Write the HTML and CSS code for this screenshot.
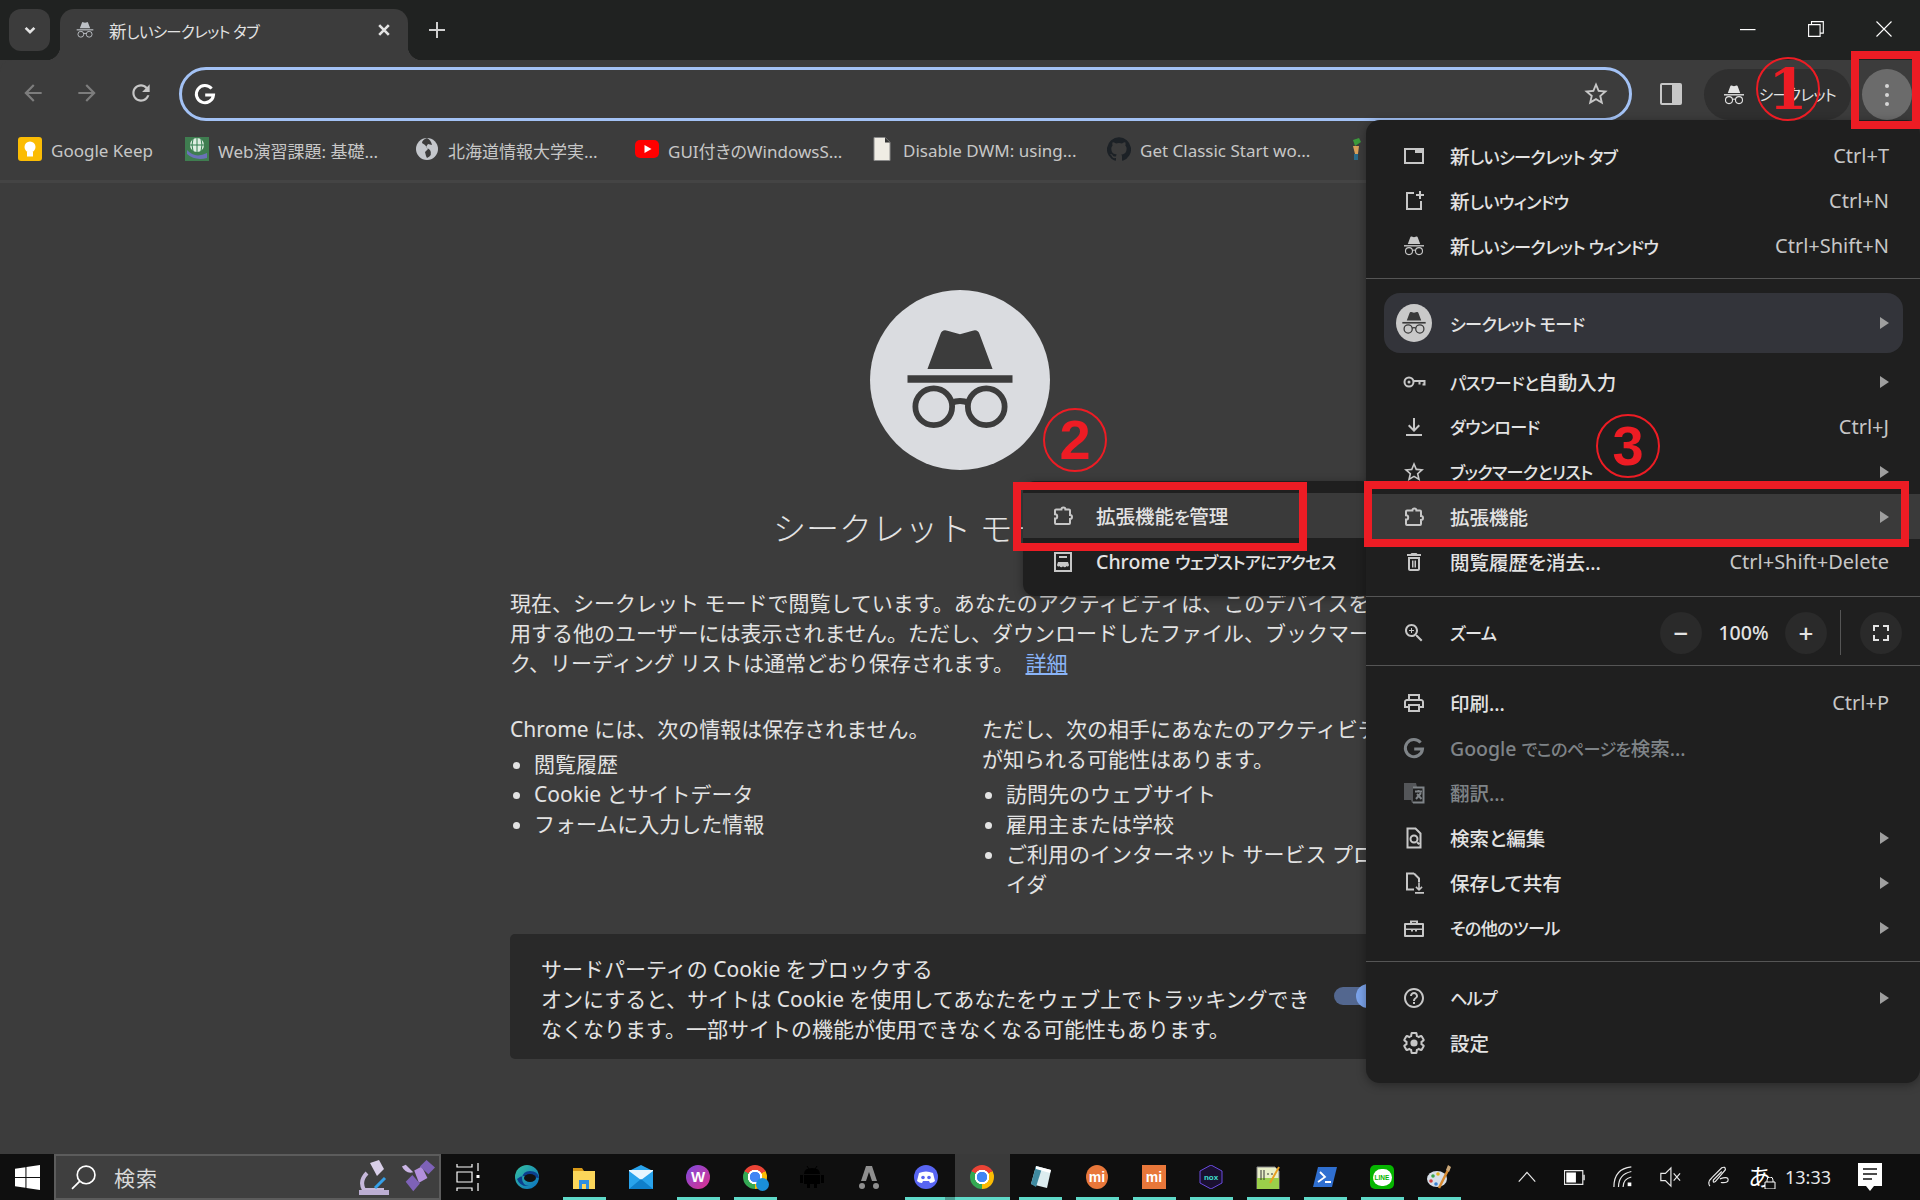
FILE: index.html
```html
<!DOCTYPE html>
<html lang="ja">
<head>
<meta charset="utf-8">
<title>新しいシークレット タブ</title>
<link rel="stylesheet" href="styles.css">
</head>
<body>
<svg class="defs" width="0" height="0">
  <symbol id="i-inc" viewBox="0 0 24 24"><path d="M5.800 9.900 8.300 3.200q.3-.9 1.300-.6l2.400.7 2.400-.7q1-.3 1.300.6l2.500 6.700z"/><path d="M2 11.100h20v1.400H2z"/><circle class="glass" cx="7" cy="17.100" r="3.500"/><circle class="glass" cx="17" cy="17.100" r="3.500"/><path class="glass" d="M10.300 16.400q1.700-.8 3.400 0"/></symbol>
  <symbol id="i-back" viewBox="0 0 24 24"><path d="M20 11H7.830l5.590-5.590L12 4l-8 8 8 8 1.410-1.410L7.830 13H20v-2z"/></symbol>
  <symbol id="i-fwd" viewBox="0 0 24 24"><path d="M12 4l-1.410 1.410L16.170 11H4v2h12.170l-5.580 5.590L12 20l8-8z"/></symbol>
  <symbol id="i-reload" viewBox="0 0 24 24"><path d="M17.650 6.350C16.200 4.900 14.210 4 12 4c-4.420 0-7.990 3.580-7.990 8s3.570 8 7.990 8c3.730 0 6.840-2.550 7.730-6h-2.080c-.82 2.330-3.040 4-5.650 4-3.310 0-6-2.690-6-6s2.690-6 6-6c1.660 0 3.140.69 4.220 1.780L13 11h7V4l-2.350 2.350z"/></symbol>
  <symbol id="i-star" viewBox="0 0 24 24"><path d="M22 9.240l-7.190-.62L12 2 9.190 8.630 2 9.240l5.460 4.730L5.820 21 12 17.270 18.180 21l-1.630-7.030L22 9.240zM12 15.400l-3.760 2.270 1-4.280-3.320-2.880 4.380-.38L12 6.100l1.710 4.040 4.380.38-3.320 2.880 1 4.280L12 15.400z"/></symbol>
  <symbol id="i-g" viewBox="0 0 24 24"><path class="stroked thick" d="M18.600 6.600A8.600 8.600 0 1 0 20.500 13H12.200"/></symbol>
  <symbol id="i-newtab" viewBox="0 0 24 24"><path fill-rule="evenodd" d="M2 4h20v16H2zm2 2v12h16V9h-7V6z"/></symbol>
  <symbol id="i-newwin" viewBox="0 0 24 24"><path d="M12 3H4v18h16v-9h-2v7H6V5h6zM17 2h2v3h3v2h-3v3h-2V7h-3V5h3z"/></symbol>
  <symbol id="i-key" viewBox="0 0 24 24"><circle class="stroked" cx="7" cy="12" r="4.500"/><circle cx="7" cy="12" r="1.500"/><path class="stroked" d="M11.500 11h11v3.500h-2M17.500 11v3.500"/></symbol>
  <symbol id="i-dl" viewBox="0 0 24 24"><path d="M11 3h2v10.200l3.600-3.600L18 11l-6 6-6-6 1.400-1.400 3.600 3.600zM4 19h16v2H4z"/></symbol>
  <symbol id="i-ext" viewBox="0 0 24 24"><path class="stroked" d="M19 11V6.500a1 1 0 0 0-1-1h-3.600a2 2 0 0 0-4 0H5a1 1 0 0 0-1 1v3.700a2.200 2.200 0 0 1 0 4.400V19a1 1 0 0 0 1 1h13a1 1 0 0 0 1-1v-4a2 2 0 0 0 0-4z"/></symbol>
  <symbol id="i-trash" viewBox="0 0 24 24"><path d="M6 19c0 1.100.9 2 2 2h8c1.100 0 2-.9 2-2V7H6v12zM8 9h8v10H8V9zm7.500-5l-1-1h-5l-1 1H5v2h14V4z"/><path d="M10 10.500h1.500v7H10zM12.500 10.500H14v7h-1.500z"/></symbol>
  <symbol id="i-zoom" viewBox="0 0 24 24"><path d="M15.500 14h-.79l-.28-.27C15.410 12.590 16 11.110 16 9.500 16 5.910 13.090 3 9.500 3S3 5.910 3 9.500 5.910 16 9.500 16c1.610 0 3.090-.59 4.230-1.570l.27.28v.79l5 4.990L20.490 19l-4.990-5zm-6 0C7.010 14 5 11.990 5 9.500S7.010 5 9.500 5 14 7.010 14 9.500 11.990 14 9.500 14zM12 10h-2v2H9v-2H7V9h2V7h1v2h2v1z"/></symbol>
  <symbol id="i-print" viewBox="0 0 24 24"><path d="M19 8h-1V3H6v5H5c-1.660 0-3 1.340-3 3v6h4v4h12v-4h4v-6c0-1.660-1.340-3-3-3zM8 5h8v3H8V5zm8 12v2H8v-4h8v2zm2-2v-2H6v2H4v-4c0-.55.45-1 1-1h14c.55 0 1 .45 1 1v4h-2z"/></symbol>
  <symbol id="i-tr" viewBox="0 0 24 24"><path d="M2 2h12l1 4h7v16H10l-1-3H2z" opacity=".55"/><path d="M11 7h10v14H11z" fill="#1f1f1f"/><path class="stroked" d="M11 6.500h10.500v15H11M13 10.500h7M16.500 9v1.500M14 18l5-6M15 13l4.500 5"/></symbol>
  <symbol id="i-find" viewBox="0 0 24 24"><path class="stroked" d="M13.500 2.500H5.500v19h13V7.500zM15.200 16.200l2 2"/><circle class="stroked" cx="12" cy="13" r="3.500"/></symbol>
  <symbol id="i-save" viewBox="0 0 24 24"><path class="stroked" d="M12 2.500H5v16h7M12 2.500l5 5v4"/><path d="M16.200 12h1.600v5l1.700-1.700 1.100 1.100-3.600 3.600-3.600-3.600 1.100-1.100 1.700 1.700zM13 21h9v1.800h-9z"/></symbol>
  <symbol id="i-tool" viewBox="0 0 24 24"><path fill-rule="evenodd" d="M8 7V4.500h8V7h5a1 1 0 0 1 1 1v12a1 1 0 0 1-1 1H3a1 1 0 0 1-1-1V8a1 1 0 0 1 1-1zm2 0h4V6.300h-4zM4 9v3.500h16V9zm0 5v5h16v-5h-5v1.500h-2V14h-2v1.500H9V14z"/></symbol>
  <symbol id="i-help" viewBox="0 0 24 24"><path d="M11 18h2v-2h-2v2zm1-16C6.480 2 2 6.480 2 12s4.480 10 10 10 10-4.480 10-10S17.520 2 12 2zm0 18c-4.410 0-8-3.590-8-8s3.590-8 8-8 8 3.590 8 8-3.590 8-8 8zm0-14c-2.210 0-4 1.790-4 4h2c0-1.100.9-2 2-2s2 .9 2 2c0 2-3 1.750-3 5h2c0-2.250 3-2.500 3-5 0-2.210-1.790-4-4-4z"/></symbol>
  <symbol id="i-gear" viewBox="0 0 24 24"><path class="stroked" d="M19.430 12.980c.04-.32.07-.64.07-.98s-.03-.66-.07-.98l2.110-1.650c.19-.15.24-.42.12-.64l-2-3.460c-.12-.22-.39-.3-.61-.22l-2.490 1c-.52-.4-1.080-.73-1.690-.98l-.38-2.650C14.460 2.180 14.250 2 14 2h-4c-.25 0-.46.18-.49.42l-.38 2.650c-.61.25-1.170.59-1.690.98l-2.490-1c-.23-.09-.49 0-.61.22l-2 3.460c-.13.22-.07.49.12.64l2.110 1.650c-.04.32-.07.65-.07.98s.03.66.07.98l-2.110 1.650c-.19.15-.24.42-.12.64l2 3.460c.12.22.39.3.61.22l2.490-1c.52.4 1.080.73 1.690.98l.38 2.650c.03.24.24.42.49.42h4c.25 0 .46-.18.49-.42l.38-2.650c.61-.25 1.170-.59 1.690-.98l2.490 1c.23.09.49 0 .61-.22l2-3.460c.12-.22.07-.49-.12-.64l-2.110-1.650z"/><circle cx="12" cy="12" r="3.600"/></symbol>
  <symbol id="i-store" viewBox="0 0 24 24"><path fill-rule="evenodd" d="M3 2h18v20H3zm2 2v16h14V4zM8 6h8v2H8zM7 12h10l1 3a1.500 1.500 0 0 1-2.600 1 1.800 1.800 0 0 1-3.400 0 1.800 1.800 0 0 1-3.400 0A1.500 1.500 0 0 1 6 15z"/></symbol>
  <symbol id="i-full" viewBox="0 0 24 24"><path d="M4 4h6v2H6v4H4zM14 4h6v6h-2V6h-4zM4 14h2v4h4v2H4zM18 14h2v6h-6v-2h4z"/></symbol>
</svg>

<div class="tabstrip">
  <button class="tab-search"><svg class="ic-16" viewBox="0 0 16 16"><path class="stroked thick" d="M3 5.500l5 5 5-5"/></svg></button>
  <div class="tab">
    <svg class="tab-icon"><use href="#i-inc"/></svg>
    <span class="tab-title">新<span class="kana">しいシークレット タブ</span></span>
    <svg class="ic-16 tab-close" viewBox="0 0 16 16"><path class="stroked thick" d="M2.500 2.500l11 11M13.500 2.500l-11 11"/></svg>
  </div>
  <svg class="new-tab" viewBox="0 0 16 16"><path d="M7 0h2v7h7v2H9v7H7V9H0V7h7z"/></svg>
  <div class="win-ctl">
    <svg class="ic-win" viewBox="0 0 16 16"><path d="M0 8h15.500v1.200H0z"/></svg>
    <svg class="ic-win" viewBox="0 0 16 16"><path class="thin" d="M.6 3.600h11.500v11.800H.6zM3.500 3.500V.6h11.800v11.500h-3"/></svg>
    <svg class="ic-win" viewBox="0 0 16 16"><path class="thin" d="M.5.500l15 15M15.500.500l-15 15"/></svg>
  </div>
</div>

<div class="toolbar">
  <svg class="tb-btn dim"><use href="#i-back"/></svg>
  <svg class="tb-btn dim"><use href="#i-fwd"/></svg>
  <svg class="tb-btn"><use href="#i-reload"/></svg>
  <div class="omnibox">
    <svg class="omni-g"><use href="#i-g"/></svg>
    <svg class="omni-star"><use href="#i-star"/></svg>
  </div>
  <svg class="side-panel" viewBox="0 0 22 22"><path fill-rule="evenodd" d="M2 0h18a2 2 0 0 1 2 2v18a2 2 0 0 1-2 2H2a2 2 0 0 1-2-2V2a2 2 0 0 1 2-2zm0 2v18h10V2z"/></svg>
  <div class="pill">
    <svg class="pill-icon"><use href="#i-inc"/></svg>
    <span class="kana">シークレット</span>
  </div>
  <div class="kebab"><i></i><i></i><i></i></div>
</div>

<div class="bookmarks">
  <div class="bm">
    <svg class="fav" viewBox="0 0 24 24"><rect width="24" height="24" rx="3" fill="#fbbc04"/><circle cx="12" cy="10" r="5.500" fill="#fff"/><rect x="9" y="15" width="6" height="4.500" fill="#fff"/></svg>
    <span>Google Keep</span>
  </div>
  <div class="bm">
    <svg class="fav" viewBox="0 0 24 24"><rect width="24" height="24" fill="#3f7d50"/><circle cx="12" cy="8" r="7" fill="#dfeee2"/><path d="M5 8h14M12 1v14M8 2q-2 6 0 12M16 2q2 6 0 12" stroke="#2f7d4d" fill="none"/><path d="M2 13q8 9 20 3v5q-12 3-20-4z" fill="#6a72b8"/></svg>
    <span>Web演習課題: 基礎...</span>
  </div>
  <div class="bm">
    <svg class="fav" viewBox="0 0 24 24"><circle cx="12" cy="12" r="11" fill="#c4c7cc"/><path d="M12 1q-5 2-5 5l3 2 3 4-3 3 1 4 1 2q6-3 3-8l-4-3 2-3 4 1q-1-5-5-7z" fill="#3c3c3c"/></svg>
    <span>北海道情報大学実...</span>
  </div>
  <div class="bm">
    <svg class="fav" viewBox="0 0 24 24"><rect y="3" width="24" height="18" rx="5" fill="#f00"/><path d="M9.500 8v8l7-4z" fill="#fff"/></svg>
    <span>GUI付きのWindowsS...</span>
  </div>
  <div class="bm">
    <svg class="fav" viewBox="0 0 24 24"><path d="M4 .5h11l5 5v18H4z" fill="#efece4" stroke="#8a8a8a"/><path d="M15 .5l5 5h-5z" fill="#333"/></svg>
    <span>Disable DWM: using...</span>
  </div>
  <div class="bm">
    <svg class="fav" viewBox="0 0 24 24"><path fill="#1c2126" d="M12 .3a12 12 0 0 0-3.800 23.400c.6.1.8-.3.8-.6v-2c-3.300.7-4-1.600-4-1.600-.6-1.400-1.400-1.800-1.400-1.800-1-.7.1-.7.1-.7 1.200 0 1.900 1.200 1.900 1.200 1 1.800 2.800 1.300 3.500 1 0-.8.4-1.300.7-1.600-2.700-.3-5.500-1.300-5.500-6 0-1.200.5-2.300 1.300-3.100-.2-.4-.6-1.600 0-3.200 0 0 1-.3 3.400 1.200a11.500 11.500 0 0 1 6 0c2.300-1.500 3.300-1.200 3.300-1.200.6 1.600.2 2.800 0 3.200.9.8 1.300 1.900 1.300 3.200 0 4.600-2.800 5.600-5.500 5.900.5.4.9 1 .9 2.200v3.300c0 .3.1.7.8.6A12 12 0 0 0 12 .3"/></svg>
    <span>Get Classic Start wo...</span>
  </div>
  <div class="bm">
    <svg class="fav" viewBox="0 0 24 24"><path d="M8 3l6-2 2 4-6 4z" fill="#3c9a3c"/><path d="M8 9h6l-1 8h-3z" fill="#d9a05a"/><path d="M9 17h4v6H9z" fill="#2a6a8a"/></svg>
  </div>
</div>

<main class="ntp">
  <div class="hero">
    <svg viewBox="0 0 24 24"><use href="#i-inc"/></svg>
  </div>
  <h1 class="ntp-title">シークレット モード</h1>
  <p class="ntp-intro">現在、シークレット モードで閲覧しています。あなたのアクティビティは、このデバイスを使<br>用する他のユーザーには表示されません。ただし、ダウンロードしたファイル、ブックマー<br>ク、リーディング リストは通常どおり保存されます。 <a href="#">詳細</a></p>
  <div class="ntp-cols">
    <div>
      <p>Chrome には、次の情報は保存されません。</p>
      <ul>
        <li>閲覧履歴</li>
        <li>Cookie とサイトデータ</li>
        <li>フォームに入力した情報</li>
      </ul>
    </div>
    <div>
      <p>ただし、次の相手にあなたのアクティビティ<br>が知られる可能性はあります。</p>
      <ul>
        <li>訪問先のウェブサイト</li>
        <li>雇用主または学校</li>
        <li>ご利用のインターネット サービス プロバ<br>イダ</li>
      </ul>
    </div>
  </div>
  <div class="cookie-card">
    <div>
      <div>サードパーティの Cookie をブロックする</div>
      <div>オンにすると、サイトは Cookie を使用してあなたをウェブ上でトラッキングでき<br>なくなります。一部サイトの機能が使用できなくなる可能性もあります。</div>
    </div>
    <div class="toggle"><i></i></div>
  </div>
</main>

<div class="taskbar">
  <svg class="win-logo" viewBox="0 0 24 24"><path d="M0 3.500l10-1.400v9.300H0zM11 2l13-2v11.400H11zM0 12.500h10v9.400L0 20.500zM11 12.500h13V24l-13-1.900z"/></svg>
  <div class="task-search">
    <svg class="search-glass" viewBox="0 0 24 24"><circle cx="14.500" cy="9.500" r="8.500"/><path d="M8.500 15.500L1 23"/></svg>
    <span>検索</span>
    <svg class="search-emoji" viewBox="0 0 34 38"><path d="M13 5l9-3 5 9-7 7z" fill="#d9cfe8"/><path d="M10 15q-8 8-3 17h20" fill="none" stroke="#c6b8da" stroke-width="4"/><path d="M2 32h30v5H2z" fill="#bcaed2"/><path d="M18 30l10-10" stroke="#35a0e8" stroke-width="3"/></svg>
    <svg class="search-emoji sat" viewBox="0 0 36 38"><path d="M14 12l8-4 6 12-9 5z" fill="#b28fdc"/><path d="M20 8l7-7 9 8-7 7z" fill="#7e62b8"/><path d="M5 24l7-7 8 9-7 8z" fill="#7e62b8"/><path d="M1 8q4 8 12 6l-8-8z" fill="#cbb6e6"/></svg>
  </div>
  <svg class="task-view" viewBox="0 0 24 28"><path d="M1 1v3h15V1M1 28v-3h15v3M1 9h15v10H1zM22 0v8M22 20v8"/><path class="fillw" d="M20.500 12h3v3h-3z"/></svg>
  <div class="task-apps">
    <div class="slot"><svg class="app" viewBox="0 0 24 24"><defs><linearGradient id="eg" x1="0" y1="0" x2="1" y2="1"><stop offset="0" stop-color="#36c3a0"/><stop offset="1" stop-color="#0a6fc2"/></linearGradient></defs><circle cx="12" cy="12" r="12" fill="url(#eg)"/><path d="M24 13q-1-7-9-7-7 0-8 7 0 7 7 8-9 1-12-7 3-3 7-3z" fill="#0c3f8e"/><ellipse cx="15" cy="13" rx="6" ry="4" fill="#111"/></svg></div>
    <div class="slot on"><svg class="app" viewBox="0 0 24 24"><path d="M1 3h9l2 3H1z" fill="#d99a18"/><path d="M1 6h22v18H1z" fill="#fbd65a"/><path d="M7 15h10v9h-3v-5h-4v5H7z" fill="#2f8fe0"/></svg></div>
    <div class="slot"><svg class="app" viewBox="0 0 24 24"><path d="M0 6l12-6 12 6v18H0z" fill="#29a3ec"/><path d="M0 6l12 9 12-9v-1H0z" fill="#e8f6ff"/><path d="M0 24l12-10 12 10z" fill="#0f7fcb"/></svg></div>
    <div class="slot on"><div class="app wps">W</div></div>
    <div class="slot on"><div class="app chrome-logo badge"><i></i></div></div>
    <div class="slot"><svg class="app" viewBox="0 0 24 24"><path d="M4 9q0-6 8-6t8 6zM4 10h16v9h-3v4h-3v-4h-4v4H7v-4H4zM0 10h3v8H0zM21 10h3v8h-3z" fill="#000"/><path d="M7 1l2 3M17 1l-2 3" stroke="#000"/></svg></div>
    <div class="slot"><svg class="app" viewBox="0 0 24 24"><path d="M9 1h6l5 15h-5l-3-9-3 9H4z" fill="#8f8f8f"/><circle cx="5" cy="21" r="3" fill="#8f8f8f"/><circle cx="19" cy="21" r="3" fill="#8f8f8f"/></svg></div>
    <div class="slot split"><svg class="app" viewBox="0 0 24 24"><circle cx="12" cy="12" r="12" fill="#5865f2"/><path d="M5 8q7-3 14 0l2 8q-2 2-5 2l-1-2H9l-1 2q-3 0-5-2z" fill="#fff"/><circle cx="9" cy="12.500" r="1.800" fill="#5865f2"/><circle cx="15" cy="12.500" r="1.800" fill="#5865f2"/></svg></div>
    <div class="slot active"><div class="app chrome-logo"></div></div>
    <div class="slot on"><svg class="app" viewBox="0 0 24 24"><path d="M8 1l15 4-4 18-16-4z" fill="#dcecef"/><path d="M3 19L8 1l6 2-6 19z" fill="#3f8aa0"/><path d="M8 1l15 4-1 3L8 4z" fill="#fff"/></svg></div>
    <div class="slot on"><div class="app mi-round">mi</div></div>
    <div class="slot on"><div class="app mi-square">mi</div></div>
    <div class="slot on"><svg class="app" viewBox="0 0 24 24"><path d="M12 0l11 6v12l-11 6L1 18V6z" fill="#1a1030" stroke="#6a4be0"/><text x="12" y="15" text-anchor="middle" class="nox">nox</text></svg></div>
    <div class="slot on"><svg class="app" viewBox="0 0 24 24"><path d="M1 2h18l4 4v18H1z" fill="#e8efc8" stroke="#888"/><path d="M1 13h22v11H1z" fill="#9bd04a"/><path d="M5 5v10M8 5v10M11 9h2M15 9h2" stroke="#333"/><path d="M23 2L14 18" stroke="#e8a020" stroke-width="2"/></svg></div>
    <div class="slot on"><svg class="app" viewBox="0 0 24 24"><path d="M5 2h19l-5 20H0z" fill="#2f6fd0"/><path d="M7 7l5 5-7 5M12 17h6" fill="none" stroke="#fff" stroke-width="1.800"/></svg></div>
    <div class="slot on"><div class="app line-app"><span>LINE</span></div></div>
    <div class="slot on"><svg class="app" viewBox="0 0 24 24"><ellipse cx="10" cy="14" rx="10" ry="8" fill="#d7dfe8"/><circle cx="6" cy="11" r="1.800" fill="#3aa54a"/><circle cx="11" cy="9" r="1.800" fill="#e0b020"/><circle cx="4" cy="16" r="1.800" fill="#d04040"/><circle cx="9" cy="19" r="1.800" fill="#3a80d0"/><path d="M12 23L22 3" stroke="#d88a30" stroke-width="2.500"/><path d="M21 0l3 2-2 5-3-2z" fill="#c9a678"/></svg></div>
  </div>
  <div class="tray">
    <svg class="tray-ic" viewBox="0 0 24 24"><path d="M3 17l9-10 9 10"/></svg>
    <svg class="tray-ic battery" viewBox="0 0 24 16"><path d="M.5.500h20v15H.5zM22 5v6"/><path class="fillw" d="M2.500 2.500H13v11H2.500z"/></svg>
    <svg class="tray-ic" viewBox="0 0 24 24"><path d="M1 23Q1 3 20 1M6 23Q6 9 20 6M11 23q0-9 9-11"/><path class="fillw" d="M16 18h4v4h-4z"/></svg>
    <svg class="tray-ic" viewBox="0 0 24 24"><path d="M2 8h5l6-6v20l-6-6H2zM16 8l7 8M23 8l-7 8"/></svg>
    <svg class="tray-ic" viewBox="0 0 24 24"><path d="M2 22q-3-5 2-9L15 2q4-2 4 2L8 17q-3 2-2-2L15 6M13 14q9-3 9 1t-8 3"/></svg>
    <span class="tray-ime">あ<svg viewBox="0 0 12 12"><path d="M1 5h10v7H1zM3 5V3a3 3 0 0 1 6 0v2"/></svg></span>
    <span class="tray-time">13:33</span>
    <svg class="tray-note" viewBox="0 0 24 28"><path d="M0 0h24v23h-8l-4 5-4-5H0z" fill="#fff"/><path d="M5 6h14M5 11h14M5 16h9" stroke="#111" stroke-width="1.300"/></svg>
  </div>
</div>

<!-- open menus -->
<div class="submenu">
  <div class="sub-row hover"><svg class="mi"><use href="#i-ext"/></svg><span>拡張機能<span class="kana">を</span>管理</span></div>
  <div class="sub-row"><svg class="mi"><use href="#i-store"/></svg><span>Chrome <span class="kana">ウェブストアにアクセス</span></span></div>
</div>

<div class="menu">
  <div class="row"><svg class="mi"><use href="#i-newtab"/></svg><span class="label">新<span class="kana">しいシークレット タブ</span></span><span class="key">Ctrl+T</span></div>
  <div class="row"><svg class="mi"><use href="#i-newwin"/></svg><span class="label">新<span class="kana">しいウィンドウ</span></span><span class="key">Ctrl+N</span></div>
  <div class="row"><svg class="mi"><use href="#i-inc"/></svg><span class="label">新<span class="kana">しいシークレット ウィンドウ</span></span><span class="key">Ctrl+Shift+N</span></div>
  <hr class="sep sep-a">
  <div class="profile">
    <span class="avatar"><svg><use href="#i-inc"/></svg></span>
    <span class="label kana">シークレット モード</span><i class="arrow"></i>
  </div>
  <div class="row mt6"><svg class="mi"><use href="#i-key"/></svg><span class="label"><span class="kana">パスワードと</span>自動入力</span><i class="arrow"></i></div>
  <div class="row"><svg class="mi"><use href="#i-dl"/></svg><span class="label kana">ダウンロード</span><span class="key">Ctrl+J</span></div>
  <div class="row"><svg class="mi"><use href="#i-star"/></svg><span class="label kana">ブックマークとリスト</span><i class="arrow"></i></div>
  <div class="row hover"><svg class="mi"><use href="#i-ext"/></svg><span class="label">拡張機能</span><i class="arrow"></i></div>
  <div class="row"><svg class="mi"><use href="#i-trash"/></svg><span class="label">閲覧履歴を消去...</span><span class="key">Ctrl+Shift+Delete</span></div>
  <hr class="sep sep-b">
  <div class="row zoom-row">
    <svg class="mi"><use href="#i-zoom"/></svg><span class="label kana">ズーム</span>
    <span class="zbtn">−</span><span class="zval">100%</span><span class="zbtn">+</span>
    <span class="zdiv"></span>
    <span class="zbtn"><svg><use href="#i-full"/></svg></span>
  </div>
  <hr class="sep sep-c">
  <div class="row"><svg class="mi"><use href="#i-print"/></svg><span class="label">印刷...</span><span class="key">Ctrl+P</span></div>
  <div class="row off"><svg class="mi"><use href="#i-g"/></svg><span class="label">Google <span class="kana">でこのページを</span>検索...</span></div>
  <div class="row off"><svg class="mi"><use href="#i-tr"/></svg><span class="label">翻訳...</span></div>
  <div class="row"><svg class="mi"><use href="#i-find"/></svg><span class="label">検索と編集</span><i class="arrow"></i></div>
  <div class="row"><svg class="mi"><use href="#i-save"/></svg><span class="label">保存して共有</span><i class="arrow"></i></div>
  <div class="row"><svg class="mi"><use href="#i-tool"/></svg><span class="label kana">その他のツール</span><i class="arrow"></i></div>
  <hr class="sep sep-d">
  <div class="row"><svg class="mi"><use href="#i-help"/></svg><span class="label kana">ヘルプ</span><i class="arrow"></i></div>
  <div class="row"><svg class="mi"><use href="#i-gear"/></svg><span class="label">設定</span></div>
</div>

<!-- red annotations -->
<div class="frame frame-1"></div>
<div class="frame frame-2"></div>
<div class="frame frame-3"></div>
<div class="num num-1">1</div>
<div class="num num-2">2</div>
<div class="num num-3">3</div>
</body>
</html>
```

FILE: styles.css
```css
* { box-sizing: border-box; }
html, body { margin: 0; height: 100%; }
body {
  width: 1920px; height: 1200px; overflow: hidden; position: relative;
  display: flex; flex-direction: column;
  background: #3c3c3c; color: #e3e3e3;
  font-family: "Noto Sans", "Noto Sans CJK JP", sans-serif;
  font-feature-settings: "palt";
}
svg { display: block; fill: currentColor; }
.defs { position: absolute; }
.stroked { fill: none; stroke: currentColor; stroke-width: 2; }
.thick { stroke-width: 3; }
.thin { fill: none; stroke: currentColor; stroke-width: 1.1; }
.glass { fill: none; stroke: currentColor; stroke-width: 1.1; }
button { border: 0; padding: 0; color: inherit; }
/* the system UI font has narrow kana */
.kana { font-size: .88em; letter-spacing: -.04em; }

/* tab strip */
.tabstrip { height: 60px; flex: none; background: #202221; display: flex; align-items: flex-start; padding: 9px 0 0 9px; position: relative; }
.tab-search { width: 41px; height: 42px; border-radius: 12px; background: #3c3c3c; display: flex; align-items: center; justify-content: center; color: #e3e3e3; }
.ic-16 { width: 14px; height: 14px; }
.tab { width: 348px; height: 51px; margin-left: 10px; background: #3c3c3c; border-radius: 14px 14px 0 0; display: flex; align-items: center; padding: 0 0 9px 15px; position: relative; font-size: 17.500px; }
.tab::before, .tab::after { content: ""; position: absolute; bottom: 0; width: 14px; height: 14px; }
.tab::before { left: -14px; background: radial-gradient(circle at 0 0, transparent 14px, #3c3c3c 14.500px); }
.tab::after { right: -14px; background: radial-gradient(circle at 100% 0, transparent 14px, #3c3c3c 14.500px); }
.tab-icon { width: 20px; height: 20px; color: #bdc1c6; }
.tab-title { margin-left: 14px; flex: 1; }
.tab-close { margin-right: 17px; color: #e3e3e3; }
.new-tab { width: 16px; height: 16px; margin: 13px 0 0 21px; color: #d0d0d0; }
.win-ctl { margin-left: auto; display: flex; gap: 52px; padding: 12px 28px 0 0; }
.ic-win { width: 16px; height: 16px; color: #fff; }

/* toolbar */
.toolbar { height: 60px; flex: none; background: #3c3c3c; border-radius: 12px 0 0 0; display: flex; align-items: flex-start; padding: 7px 0 0 6px; position: relative; }
.tb-btn { width: 26px; height: 26px; margin: 13px 14px 0; color: #c7c7c7; }
.dim { color: #7d7d7d; }
.omnibox { width: 1453px; height: 54px; margin-left: 11px; border: 3px solid #a3c2f5; border-radius: 27px; display: flex; align-items: center; justify-content: space-between; padding: 0 19px 0 11px; }
.omni-g { width: 24px; height: 24px; color: #fff; }
.omni-star { width: 28px; height: 28px; color: #c7c7c7; }
.side-panel { width: 22px; height: 22px; margin: 16px 0 0 28px; color: #c7c7c7; }
.pill { width: 147px; height: 51px; margin: 2px 0 0 22px; background: #2f2f2f; border-radius: 26px; display: flex; align-items: center; padding-left: 18px; font-size: 17.500px; }
.pill-icon { width: 24px; height: 24px; color: #e3e3e3; }
.pill span { margin-left: 13px; }
.kebab { width: 50px; height: 51px; margin: 2px 0 0 11px; background: #6b6b6b; border-radius: 50%; display: flex; flex-direction: column; align-items: center; justify-content: center; gap: 5px; }
.kebab i { width: 4px; height: 4px; border-radius: 50%; background: #d6d6d6; }

/* bookmarks */
.bookmarks { height: 63px; flex: none; background: #3c3c3c; border-bottom: 3px solid #444; display: grid; grid-template-columns: 167px 230px 220px 235px 237px 238px auto; align-items: center; padding: 0 0 3px 18px; font-size: 17px; color: #c7c7c7; }
.bm { display: flex; align-items: center; gap: 9px; white-space: nowrap; }
.bm span { padding-top: 3px; }
.fav { width: 24px; height: 24px; flex: none; }

/* new tab page */
.ntp { flex: 1; padding-top: 107px; padding-left: 510px; font-size: 21px; line-height: 30px; white-space: nowrap; font-feature-settings: normal; }
.hero { width: 180px; height: 180px; margin-left: 360px; border-radius: 50%; background: #dadce0; display: flex; align-items: center; justify-content: center; color: #3c3c3c; }
.hero svg { width: 126px; height: 126px; }
.ntp-title { margin: 37px 0 0 263px; font-size: 33px; line-height: 44px; font-weight: 300; }
.ntp-intro { margin: 37px 0 0; }
.ntp-intro a { color: #8ab4f8; margin-left: 6px; }
.ntp-cols { display: grid; grid-template-columns: 472px 472px; margin-top: 36px; }
.ntp-cols p { margin: 0; }
.ntp-cols ul { margin: 5px 0 0; padding-left: 24px; }
.cookie-card { width: 900px; height: 125px; margin-top: 35px; background: #292929; border-radius: 5px; padding: 20px 0 0 31px; position: relative; display: flex; }
.toggle { position: absolute; left: 824px; top: 53px; width: 40px; height: 18px; border-radius: 9px; background: #53678f; }
.toggle i { position: absolute; left: 22px; top: -3px; width: 24px; height: 24px; border-radius: 50%; background: #7ba3ea; }

/* taskbar */
.taskbar { height: 46px; flex: none; background: #0f0f0f; display: flex; align-items: center; color: #fff; }
.win-logo { width: 25px; height: 25px; margin-left: 15px; }
.task-search { width: 387px; height: 46px; margin-left: 14px; border: 2px solid #5c5c5c; background: #3f3f3f; display: flex; align-items: center; padding-left: 15px; font-size: 21px; color: #d8d8d8; }
.search-glass { width: 25px; height: 25px; fill: none; stroke: #fff; stroke-width: 1.600; }
.task-search span { margin-left: 18px; flex: 1; letter-spacing: 1px; }
.search-emoji { width: 34px; height: 38px; }
.search-emoji.sat { margin: 0 4px 0 10px; }
.task-view { width: 24px; height: 28px; margin-left: 15px; fill: none; stroke: #fff; stroke-width: 1.200; }
.fillw { fill: #fff; stroke: none; }
.task-apps { display: flex; margin-left: 18.500px; height: 100%; }
.slot { width: 57px; height: 100%; display: flex; align-items: center; justify-content: center; position: relative; }
.slot.on::after, .slot.split::after, .slot.active::after { content: ""; position: absolute; left: 7px; right: 7px; bottom: 0; height: 3px; background: #5fd9c8; }
.slot.split::after { right: -7px; background: linear-gradient(90deg, #5fd9c8 0 70%, #4a9c90 70%); }
.slot.active { background: #3a3a3a; width: 55px; margin-right: 2px; }
.slot.active::after { left: 0; right: 0; }
.app { width: 24px; height: 24px; }
.chrome-logo { border-radius: 50%; position: relative; background: radial-gradient(circle, #4285f4 0 5px, #fff 5.500px 7px, transparent 7.500px), conic-gradient(from -60deg, #ea4335 0 120deg, #fbbc04 120deg 240deg, #34a853 240deg 360deg); }
.chrome-logo.badge i { position: absolute; right: -2px; bottom: -2px; width: 13px; height: 13px; border-radius: 50%; background: #1a8fd8; }
.wps { border-radius: 50%; background: linear-gradient(135deg, #7a4be0, #e0308a); color: #fff; font: 700 15px/24px "Liberation Sans", sans-serif; text-align: center; }
.mi-round, .mi-square { background: #e8773a; color: #fff; font: 700 14px/24px "Liberation Sans", sans-serif; text-align: center; }
.mi-round { border-radius: 50%; width: 22px; height: 24px; }
.nox { font: 700 8px "Liberation Sans", sans-serif; fill: #3fe0d0; }
.line-app { background: #06b500; border-radius: 5px; display: flex; align-items: center; justify-content: center; }
.line-app span { width: 19px; height: 17px; border-radius: 9px; background: #fff; color: #06b500; font: 700 6.500px/17px "Liberation Sans", sans-serif; text-align: center; }
.tray { margin-left: auto; display: grid; grid-template-columns: 48px 48px 50px 42px 56px 26px 70px 54px; justify-items: center; align-items: center; padding-right: 23px; }
.tray-ic { width: 22px; height: 22px; fill: none; stroke: #e8e8e8; stroke-width: 1.300; }
.tray-ic.battery { width: 22px; height: 15px; }
.tray-ime { font-size: 24px; position: relative; line-height: 24px; }
.tray-ime svg { position: absolute; right: -4px; bottom: 0; width: 12px; height: 12px; fill: #0f0f0f; stroke: #fff; }
.tray-time { font-size: 18px; color: #e8e8e8; }
.tray-note { width: 24px; height: 28px; }

/* open menus */
.menu, .submenu { position: absolute; background: #1f1f1f; font-size: 19.500px; font-weight: 500; white-space: nowrap; color: #e3e3e3; box-shadow: 0 2px 10px rgba(0,0,0,.35); }
.menu { left: 1366px; top: 120px; width: 554px; height: 963px; border-radius: 14px; padding-top: 13px; }
.submenu { left: 1023px; top: 481px; width: 350px; height: 115px; border-radius: 12px; padding-top: 12px; }
.row { height: 45px; display: flex; align-items: center; padding: 0 31px 0 36px; }
.mt6 { margin-top: 6px; }
.row .mi { margin-right: 24px; }
.mi { width: 24px; height: 24px; flex: none; color: #c7c7c7; }
.label { flex: 1; }
.key { font-weight: 400; font-size: 20px; color: #c7c7c7; }
.arrow { width: 0; height: 0; border-left: 9px solid #9f9f9f; border-top: 6.500px solid transparent; border-bottom: 6.500px solid transparent; }
.hover { background: #3a3a3a; }
.off, .off .mi { color: #7f8488; }
.sep { height: 1px; border: 0; margin: 11px 0; background: #555; }
.sep-a { margin: 10px 0 14px; }
.sep-b { margin: 12px 0 13px; }
.sep-c { margin: 10px 0 14px; }
.sep-d { margin: 11px 0 13px; }
.profile { margin: 0 17px 0 18px; height: 60px; background: #33343a; border-radius: 16px; display: flex; align-items: center; padding: 0 14px 0 12px; }
.avatar { width: 36px; height: 38px; border-radius: 50%; background: #c9c9c9; color: #3a3a3a; display: flex; align-items: center; justify-content: center; margin-right: 18px; }
.avatar svg { width: 28px; height: 28px; }
.zoom-row { padding-right: 18px; }
.zbtn { width: 42px; height: 42px; border-radius: 50%; background: #2a2a2a; display: flex; align-items: center; justify-content: center; font-size: 26px; line-height: 1; }
.zbtn svg { width: 24px; height: 24px; }
.zval { width: 83px; text-align: center; }
.zdiv { width: 1px; height: 45px; margin: 0 19px 0 13px; background: #555; }
.sub-row { height: 45px; display: flex; align-items: center; padding-left: 28px; gap: 21px; }
.sub-row:last-child { margin-top: 1px; }

/* red annotations */
.frame { position: absolute; border: 8px solid #ed1c24; }
.frame-1 { left: 1851px; top: 51px; width: 69px; height: 78px; }
.frame-2 { left: 1013px; top: 482px; width: 294px; height: 69px; }
.frame-3 { left: 1364px; top: 481px; width: 545px; height: 66px; }
.num { position: absolute; width: 64px; height: 64px; border: 2px solid #ed1c24; border-radius: 50%; color: #ed1c24; display: flex; align-items: center; justify-content: center; font: 700 56px/1 "Liberation Sans", sans-serif; }
.num-1 { left: 1756px; top: 57px; font-family: "DejaVu Serif", serif; }
.num-2 { left: 1043px; top: 408px; }
.num-3 { left: 1596px; top: 414px; }
```
